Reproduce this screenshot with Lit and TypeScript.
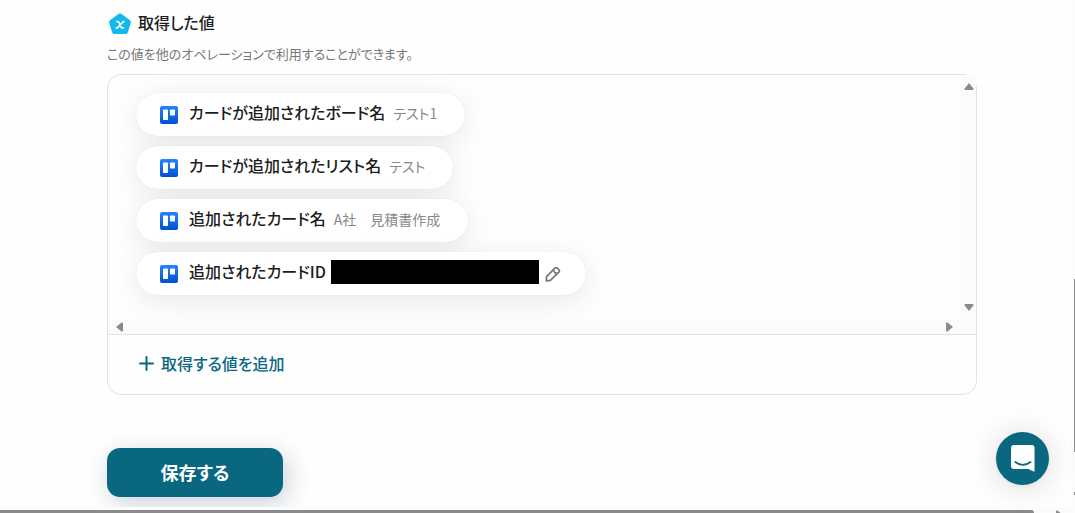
import { LitElement, html, css, svg, nothing } from "lit";
import { customElement, property } from "lit/decorators.js";

const FONT = css`"Noto Sans CJK JP", "Noto Sans", sans-serif`;

type Item = { label: string; value?: string; masked?: boolean };

const ITEMS: Item[] = [
  { label: "カードが追加されたボード名", value: "テスト1" },
  { label: "カードが追加されたリスト名", value: "テスト" },
  { label: "追加されたカード名", value: "A社　見積書作成" },
  { label: "追加されたカードID", masked: true },
];

const ARROWS: Record<string, string> = {
  up: "M5 1 L9.4 6.5 Q9.8 8 8.8 8 H1.2 Q0.2 8 0.6 6.5 Z",
  down: "M5 9 L9.4 3.5 Q9.8 2 8.8 2 H1.2 Q0.2 2 0.6 3.5 Z",
  left: "M1 5 L6.5 0.6 Q8 0.2 8 1.2 V8.8 Q8 9.8 6.5 9.4 Z",
  right: "M9 5 L3.5 0.6 Q2 0.2 2 1.2 V8.8 Q2 9.8 3.5 9.4 Z",
};

const arrow = (dir: string) => html`<svg class="arrow" width="10" height="10" viewBox="0 0 10 10" aria-hidden="true">
  ${svg`<path d=${ARROWS[dir]} fill="#8b8b8b" />`}
</svg>`;

@customElement("value-chip")
class ValueChip extends LitElement {
  @property() label = "";
  @property() value = "";
  @property({ type: Boolean }) masked = false;

  static styles = css`
    :host {
      display: flex;
      align-items: center;
      box-sizing: border-box;
      height: 43px;
      padding: 0 28px 0 24px;
      border-radius: 22px;
      background: #fff;
      box-shadow: 0 0 1px rgba(0, 0, 0, 0.12), 0 6px 30px rgba(0, 0, 0, 0.09);
      white-space: nowrap;
    }
    :host([masked]) {
      padding-right: 25px;
    }
    .logo {
      flex: none;
      margin-right: 11px;
    }
    .label {
      font-size: 16px;
      line-height: 24px;
      font-weight: 500;
      color: #1c1c1c;
      padding-bottom: 6px;
    }
    .value {
      margin-left: 8px;
      font-size: 14px;
      line-height: 24px;
      color: #888;
      padding-bottom: 4px;
    }
    .mask {
      width: 208px;
      height: 24px;
      margin: 0 6px 3px 5px;
      background: #000;
    }
    .edit {
      display: flex;
      border: 0;
      padding: 0;
      background: none;
      cursor: pointer;
    }
  `;

  render() {
    return html`
      <svg class="logo" width="18" height="18" viewBox="0 0 18 18" aria-hidden="true">
        <defs>
          <linearGradient id="g" x1="0" y1="0" x2="0" y2="1">
            <stop offset="0" stop-color="#2684ff" />
            <stop offset="1" stop-color="#0052cc" />
          </linearGradient>
        </defs>
        <rect width="18" height="18" rx="2" fill="url(#g)" />
        <rect x="3" y="3.5" width="5" height="10.5" rx="0.8" fill="#fff" />
        <rect x="10" y="3.5" width="5" height="6" rx="0.8" fill="#fff" />
      </svg>
      <span class="label">${this.label}</span>
      ${this.value ? html`<span class="value">${this.value}</span>` : nothing}
      ${this.masked
        ? html`<span class="mask"></span>
            <button class="edit" aria-label="編集">
              <svg width="16" height="16" viewBox="0 0 16 16" fill="none" stroke="#777" stroke-width="1.7" stroke-linejoin="round">
                <path d="M1.2 14.8 L1.6 10.6 L9.8 2.2 Q11.1 1 12.4 2.2 L13.8 3.6 Q15 4.9 13.8 6.2 L5.4 14.4 Z" />
                <path d="M8.4 3.9 L9.6 6.5 L12.2 7.6" />
              </svg>
            </button>`
        : nothing}
    `;
  }
}

@customElement("app-root")
class AppRoot extends LitElement {
  static styles = css`
    :host {
      display: grid;
      grid-template-columns: minmax(0, 1fr) 4px;
      grid-template-rows: minmax(0, 1fr) 6px;
      height: 100vh;
      background: #fefefe;
      font-family: ${FONT};
      font-feature-settings: "palt";
      color: #1c1c1c;
    }
    button {
      font: inherit;
      font-feature-settings: inherit;
      border: 0;
      cursor: pointer;
    }
    main {
      overflow: hidden;
      padding: 9px 94px 0 107px;
    }
    .heading {
      display: flex;
      align-items: center;
      gap: 6px;
      padding-left: 1px;
    }
    .heading svg {
      margin-top: 4px;
    }
    h2 {
      margin: 0;
      font-size: 16px;
      line-height: 24px;
      font-weight: 500;
    }
    .hint {
      margin: 10px 0 11px;
      font-size: 13px;
      line-height: 18px;
      color: #777;
    }
    .card {
      border: 1px solid #e3e3e3;
      border-radius: 14px;
    }
    .pane {
      display: grid;
      grid-template-columns: minmax(0, 1fr) 15px;
      grid-template-rows: auto 15px;
      border-bottom: 1px solid #e3e3e3;
    }
    .list {
      overflow: hidden;
      display: flex;
      flex-direction: column;
      align-items: flex-start;
      gap: 10px;
      padding: 18px 28px 24px;
      border-top-left-radius: 13px;
    }
    .bar {
      display: flex;
      justify-content: space-between;
      align-items: center;
      background: #fbfbfb;
    }
    .bar.vertical {
      flex-direction: column;
      padding: 7px 0;
    }
    .bar.horizontal {
      padding: 0 7px;
    }
    .corner {
      background: #fbfbfb;
    }
    .arrow {
      display: block;
      flex: none;
    }
    .add {
      display: flex;
      align-items: center;
      gap: 7px;
      margin: 16px 31px 19px;
      padding: 0;
      background: none;
      color: #0a6780;
      font-size: 16px;
      line-height: 24px;
      font-weight: 500;
    }
    .save {
      display: block;
      width: 176px;
      height: 49px;
      margin-top: 53px;
      padding: 0 0 2px;
      border-radius: 13px;
      background: #0a6780;
      color: #fff;
      font-size: 18px;
      line-height: 26px;
      font-weight: 700;
      box-shadow: 4px 6px 24px rgba(20, 50, 80, 0.22);
    }
    .page-y {
      display: flex;
      flex-direction: column;
      align-items: flex-end;
      background: #fbfbfb;
    }
    .page-y .thumb {
      width: 1px;
      height: 173px;
      margin-top: 279px;
      background: #8b8b8b;
    }
    .page-y .tip {
      width: 1px;
      height: 3px;
      margin-top: 40px;
      background: #8b8b8b;
    }
    .page-x {
      grid-column: 1 / -1;
      display: flex;
      overflow: hidden;
      padding-top: 3px;
      padding-right: 11px;
      justify-content: space-between;
      background: #fbfbfb;
    }
    .page-x .thumb {
      flex: 1;
      margin-right: 20px;
      border-top-right-radius: 4px;
      background: #8b8b8b;
    }
    .chat {
      position: fixed;
      right: 26px;
      bottom: 28px;
      display: grid;
      place-items: center;
      width: 53px;
      height: 53px;
      padding: 0;
      border-radius: 50%;
      background: #0a6780;
      box-shadow: 0 1px 6px rgba(0, 0, 0, 0.06), 0 2px 32px rgba(0, 0, 0, 0.14);
    }
  `;

  render() {
    return html`
      <main>
        <div class="heading">
          <svg width="24" height="22" viewBox="0 0 24 22" aria-hidden="true">
            <path d="M10.4 1 Q12 0 13.6 1 L22 7.2 Q23.3 8.3 22.8 9.8 L19.8 19.4 Q19.2 21 17.5 21 H6.5 Q4.8 21 4.2 19.4 L1.2 9.8 Q0.7 8.3 2 7.2 Z" fill="#12b9ea" />
            <path d="M8.8 8.6 Q10.6 8 11.3 9.8 L12.8 13.6 Q13.5 15.4 15.4 14.8 M15.9 8.6 Q14.9 8.5 13.8 9.9 L10.5 13.7 Q9.4 15.1 8.3 14.9" fill="none" stroke="#fff" stroke-width="1.6" stroke-linecap="round" />
          </svg>
          <h2>取得した値</h2>
        </div>
        <p class="hint">この値を他のオペレーションで利用することができます。</p>
        <section class="card">
          <div class="pane">
            <div class="list">
              ${ITEMS.map(
                (i) => html`<value-chip .label=${i.label} .value=${i.value ?? ""} ?masked=${!!i.masked}></value-chip>`
              )}
            </div>
            <div class="bar vertical">${arrow("up")}${arrow("down")}</div>
            <div class="bar horizontal">${arrow("left")}${arrow("right")}</div>
            <div class="corner"></div>
          </div>
          <button class="add">
            <svg width="15" height="15" viewBox="0 0 15 15" aria-hidden="true">
              <path d="M7.5 1 V14 M1 7.5 H14" stroke="#0a6780" stroke-width="2" stroke-linecap="round" />
            </svg>
            取得する値を追加
          </button>
        </section>
        <button class="save">保存する</button>
      </main>
      <div class="page-y"><span class="thumb"></span><span class="tip"></span></div>
      <div class="page-x"><span class="thumb"></span>${arrow("right")}</div>
      <button class="chat" aria-label="チャット">
        <svg width="24" height="27" viewBox="0 0 24 27" aria-hidden="true">
          <path d="M3 0 H21 Q23.5 0 23.5 3 V26.8 Q20 25.6 17.5 24 H3 Q0 24 0 21 V3 Q0 0 3 0 Z" fill="#fff" />
          <path d="M4.2 17 Q11.8 22.8 19.6 17" fill="none" stroke="#0a6780" stroke-width="1.7" stroke-linecap="round" />
        </svg>
      </button>
    `;
  }
}
